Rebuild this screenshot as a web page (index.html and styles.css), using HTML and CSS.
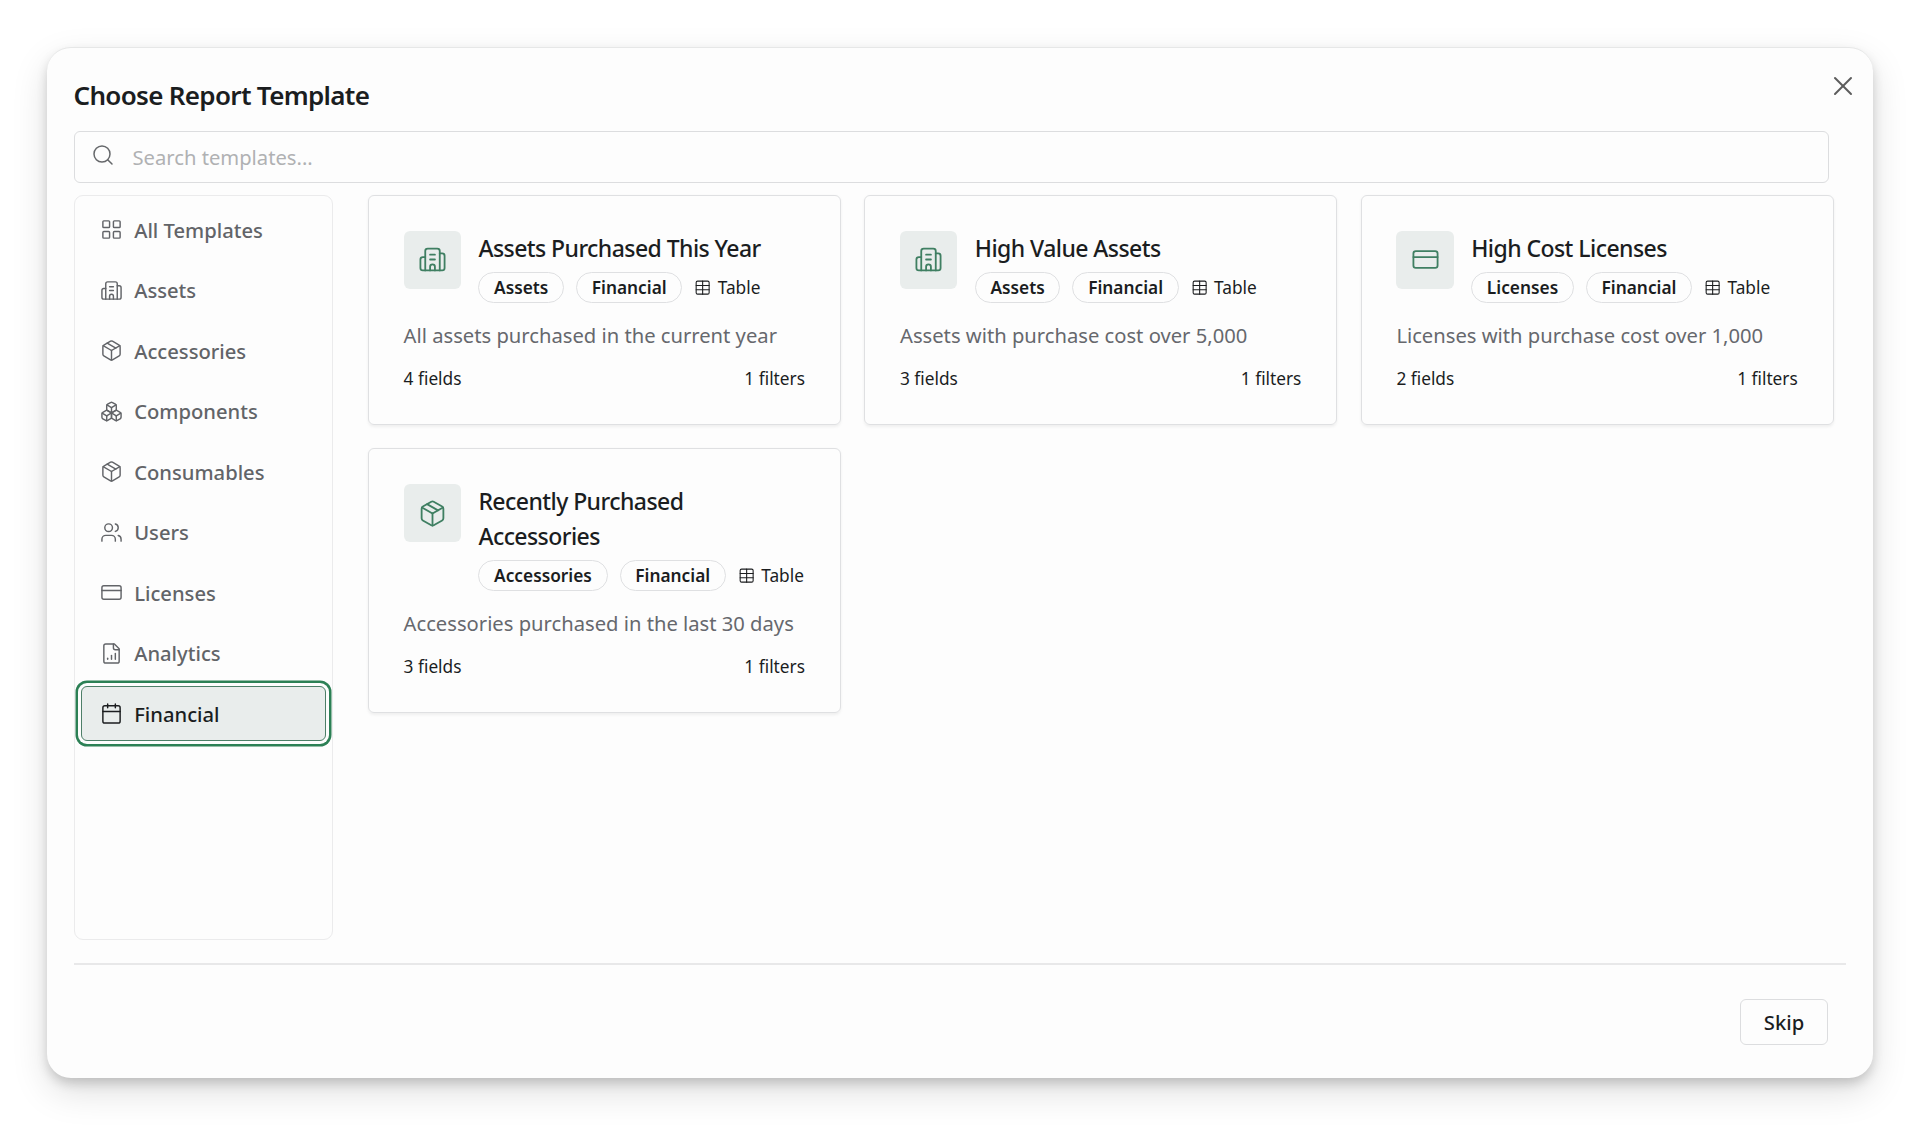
FILE: index.html
```html
<!DOCTYPE html>
<html lang="en">
<head>
    <meta charset="UTF-8">
    <meta name="viewport" content="width=device-width, initial-scale=1.0">
    <title>Choose Report Template</title>
    <link rel="stylesheet" href="styles.css">
</head>
<body>

    <!-- shared icons -->
    <svg class="icon-defs" width="0" height="0">
        <symbol id="i-grid" viewBox="0 0 24 24"><rect x="3" y="3" width="7" height="7" rx="1"/><rect x="14" y="3" width="7" height="7" rx="1"/><rect x="14" y="14" width="7" height="7" rx="1"/><rect x="3" y="14" width="7" height="7" rx="1"/></symbol>
        <symbol id="i-building" viewBox="0 0 24 24"><path d="M10 12h4"/><path d="M10 8h4"/><path d="M14 21v-3a2 2 0 0 0-4 0v3"/><path d="M6 10H4a2 2 0 0 0-2 2v7a2 2 0 0 0 2 2h16a2 2 0 0 0 2-2V9a2 2 0 0 0-2-2h-2"/><path d="M6 21V5a2 2 0 0 1 2-2h8a2 2 0 0 1 2 2v16"/></symbol>
        <symbol id="i-package" viewBox="0 0 24 24"><path d="M11 21.73a2 2 0 0 0 2 0l7-4A2 2 0 0 0 21 16V8a2 2 0 0 0-1-1.73l-7-4a2 2 0 0 0-2 0l-7 4A2 2 0 0 0 3 8v8a2 2 0 0 0 1 1.73z"/><path d="M12 22V12"/><path d="M3.29 7 12 12l8.71-5"/><path d="m7.5 4.27 9 5.15"/></symbol>
        <symbol id="i-boxes" viewBox="0 0 24 24"><path d="M2.97 12.92A2 2 0 0 0 2 14.63v3.24a2 2 0 0 0 .97 1.71l3 1.8a2 2 0 0 0 2.06 0L12 19v-5.5l-5-3-4.03 2.42Z"/><path d="m7 16.5-4.74-2.85"/><path d="m7 16.5 5-3"/><path d="M7 16.5v5.17"/><path d="M12 13.5V19l3.97 2.38a2 2 0 0 0 2.06 0l3-1.8a2 2 0 0 0 .97-1.71v-3.24a2 2 0 0 0-.97-1.71L17 10.5l-5 3Z"/><path d="m17 16.5-5-3"/><path d="m17 16.5 4.74-2.85"/><path d="M17 16.5v5.17"/><path d="M7.97 4.42A2 2 0 0 0 7 6.13v4.37l5 3 5-3V6.13a2 2 0 0 0-.97-1.71l-3-1.8a2 2 0 0 0-2.06 0l-3 1.8Z"/><path d="M12 8 7.26 5.15"/><path d="m12 8 4.74-2.85"/><path d="M12 13.5V8"/></symbol>
        <symbol id="i-users" viewBox="0 0 24 24"><path d="M16 21v-2a4 4 0 0 0-4-4H6a4 4 0 0 0-4 4v2"/><circle cx="9" cy="7" r="4"/><path d="M22 21v-2a4 4 0 0 0-3-3.87"/><path d="M16 3.13a4 4 0 0 1 0 7.75"/></symbol>
        <symbol id="i-card" viewBox="0 0 24 24"><rect x="2" y="5" width="20" height="14" rx="2"/><path d="M2 10h20"/></symbol>
        <symbol id="i-chart" viewBox="0 0 24 24"><path d="M15 2H6a2 2 0 0 0-2 2v16a2 2 0 0 0 2 2h12a2 2 0 0 0 2-2V7Z"/><path d="M14 2v4a2 2 0 0 0 2 2h4"/><path d="M8 18v-1"/><path d="M12 18v-4"/><path d="M16 18v-6"/></symbol>
        <symbol id="i-calendar" viewBox="0 0 24 24"><path d="M8 2v4"/><path d="M16 2v4"/><rect x="3" y="4" width="18" height="18" rx="2"/><path d="M3 10h18"/></symbol>
        <symbol id="i-table" viewBox="0 0 24 24"><rect x="3" y="3" width="18" height="18" rx="2"/><path d="M12 3v18"/><path d="M3 9h18"/><path d="M3 15h18"/></symbol>
        <symbol id="i-search" viewBox="0 0 24 24"><circle cx="11" cy="11" r="8"/><path d="m21 21-4.3-4.3"/></symbol>
        <symbol id="i-close" viewBox="0 0 24 24"><path d="M18 6 6 18"/><path d="m6 6 12 12"/></symbol>
    </svg>

    <div class="dialog">
        <button class="close-btn" aria-label="Close"><svg class="icon"><use href="#i-close"/></svg></button>

        <h1>Choose Report Template</h1>

        <div class="search">
            <svg class="icon"><use href="#i-search"/></svg>
            <input type="text" placeholder="Search templates...">
        </div>

        <div class="content">
            <nav class="sidebar">
                <button class="nav-item"><svg class="icon"><use href="#i-grid"/></svg>All Templates</button>
                <button class="nav-item"><svg class="icon"><use href="#i-building"/></svg>Assets</button>
                <button class="nav-item"><svg class="icon"><use href="#i-package"/></svg>Accessories</button>
                <button class="nav-item"><svg class="icon"><use href="#i-boxes"/></svg>Components</button>
                <button class="nav-item"><svg class="icon"><use href="#i-package"/></svg>Consumables</button>
                <button class="nav-item"><svg class="icon"><use href="#i-users"/></svg>Users</button>
                <button class="nav-item"><svg class="icon"><use href="#i-card"/></svg>Licenses</button>
                <button class="nav-item"><svg class="icon"><use href="#i-chart"/></svg>Analytics</button>
                <button class="nav-item active"><svg class="icon"><use href="#i-calendar"/></svg>Financial</button>
            </nav>

            <div class="templates">
                <div class="card">
                    <div class="card-top">
                        <div class="card-icon"><svg class="icon"><use href="#i-building"/></svg></div>
                        <div class="card-head">
                            <h2>Assets Purchased This Year</h2>
                            <div class="tags">
                                <span class="badge">Assets</span>
                                <span class="badge">Financial</span>
                                <span class="type"><svg class="icon"><use href="#i-table"/></svg>Table</span>
                            </div>
                        </div>
                    </div>
                    <p>All assets purchased in the current year</p>
                    <div class="meta"><span>4 fields</span><span>1 filters</span></div>
                </div>

                <div class="card">
                    <div class="card-top">
                        <div class="card-icon"><svg class="icon"><use href="#i-building"/></svg></div>
                        <div class="card-head">
                            <h2>High Value Assets</h2>
                            <div class="tags">
                                <span class="badge">Assets</span>
                                <span class="badge">Financial</span>
                                <span class="type"><svg class="icon"><use href="#i-table"/></svg>Table</span>
                            </div>
                        </div>
                    </div>
                    <p>Assets with purchase cost over 5,000</p>
                    <div class="meta"><span>3 fields</span><span>1 filters</span></div>
                </div>

                <div class="card">
                    <div class="card-top">
                        <div class="card-icon"><svg class="icon"><use href="#i-card"/></svg></div>
                        <div class="card-head">
                            <h2>High Cost Licenses</h2>
                            <div class="tags">
                                <span class="badge">Licenses</span>
                                <span class="badge">Financial</span>
                                <span class="type"><svg class="icon"><use href="#i-table"/></svg>Table</span>
                            </div>
                        </div>
                    </div>
                    <p>Licenses with purchase cost over 1,000</p>
                    <div class="meta"><span>2 fields</span><span>1 filters</span></div>
                </div>

                <div class="card">
                    <div class="card-top">
                        <div class="card-icon"><svg class="icon"><use href="#i-package"/></svg></div>
                        <div class="card-head">
                            <h2>Recently Purchased Accessories</h2>
                            <div class="tags">
                                <span class="badge">Accessories</span>
                                <span class="badge">Financial</span>
                                <span class="type"><svg class="icon"><use href="#i-table"/></svg>Table</span>
                            </div>
                        </div>
                    </div>
                    <p>Accessories purchased in the last 30 days</p>
                    <div class="meta"><span>3 fields</span><span>1 filters</span></div>
                </div>
            </div>
        </div>

        <div class="footer">
            <button class="skip-btn">Skip</button>
        </div>
    </div>

</body>
</html>
```
FILE: styles.css
```css
* {
    box-sizing: border-box;
}

body {
    margin: 0;
    padding: 47px;
    height: 1125px;
    overflow: hidden;
    background: #ffffff;
    color: #1b1d1f;
    font-family: "Noto Sans", sans-serif;
}

h1, h2, p {
    margin: 0;
}

button, input {
    font-family: inherit;
    background: none;
    border: none;
    padding: 0;
    color: inherit;
}

.icon-defs {
    position: absolute;
}

.icon {
    width: 23px;
    height: 23px;
    flex-shrink: 0;
    fill: none;
    stroke: currentColor;
    stroke-width: 1.5;
    stroke-linecap: round;
    stroke-linejoin: round;
}

.dialog {
    position: relative;
    display: flex;
    flex-direction: column;
    width: 1826px;
    height: 1031px;
    padding: 29px 27px 0;
    background: #fdfdfd;
    border-top: 1px solid #e6e7e7;
    border-radius: 24px;
    box-shadow: 0 14px 36px rgba(0, 0, 0, 0.13), 0 6px 12px -1px rgba(0, 0, 0, 0.18);
}

.close-btn {
    position: absolute;
    top: 21.5px;
    right: 14px;
    width: 32px;
    height: 32px;
    color: #5c5c5c;
}

.close-btn .icon {
    width: 32px;
    height: 32px;
    display: block;
}

h1 {
    margin-left: -0.5px;
    font-size: 26px;
    line-height: 36px;
    font-weight: 600;
    letter-spacing: -0.68px;
}

.search {
    display: flex;
    align-items: center;
    width: 1755px;
    height: 52px;
    margin-top: 18px;
    padding: 0 16px;
    border: 1px solid #dcdddf;
    border-radius: 6px;
}

.search .icon {
    width: 24px;
    height: 24px;
    margin-top: -5px;
    color: #66686b;
}

.search input {
    flex: 1;
    margin-left: 17.5px;
    font-size: 20.2px;
    outline: none;
}

.search input::placeholder {
    color: #b0b1b3;
}

.content {
    display: flex;
    gap: 35px;
    margin-top: 12px;
}

.sidebar {
    display: flex;
    flex-direction: column;
    gap: 5.8px;
    width: 259px;
    height: 745px;
    padding: 6.6px 6px;
    border: 1px solid #ebebec;
    border-radius: 9px;
}

.nav-item {
    display: flex;
    align-items: center;
    gap: 11.6px;
    height: 54.7px;
    padding: 0 18.6px;
    border-radius: 6px;
    color: #626468;
    font-size: 20.2px;
    font-weight: 500;
}

.nav-item.active {
    background: #e9edec;
    color: #1b1d1f;
    border: 1px solid #4d7f68;
    padding: 0 17.6px;
    box-shadow: 0 0 0 3px #fdfdfd, 0 0 0 5.5px #2c8055;
}

.templates {
    display: grid;
    grid-template-columns: repeat(3, 473px);
    gap: 23.4px;
    align-content: start;
}

.card {
    padding: 35px 35px 34px 34.6px;
    border: 1px solid #dfe0e2;
    border-radius: 6px;
    box-shadow: 0 1.5px 3px rgba(0, 0, 0, 0.06);
}

.card-top {
    display: flex;
    gap: 17.3px;
}

.card-icon {
    display: flex;
    align-items: center;
    justify-content: center;
    flex-shrink: 0;
    width: 57.5px;
    height: 57.5px;
    background: #e9edec;
    border-radius: 6px;
    color: #3f7f62;
}

.card-icon .icon {
    width: 29px;
    height: 29px;
}

h2 {
    font-size: 23px;
    line-height: 34.6px;
    font-weight: 500;
    letter-spacing: -0.56px;
}

.tags {
    display: flex;
    align-items: center;
    gap: 12px;
    margin-top: 6.6px;
    font-size: 17.3px;
    white-space: nowrap;
}

.badge {
    height: 31px;
    padding: 0 14.7px;
    border: 1px solid #dfe0e2;
    border-radius: 16px;
    line-height: 29.5px;
    font-weight: 600;
}

.type {
    display: flex;
    align-items: center;
    gap: 6px;
}

.type .icon {
    width: 17.3px;
    height: 17.3px;
}

.card p {
    margin-top: 17.8px;
    color: #66686d;
    font-size: 20.2px;
    line-height: 28.8px;
    white-space: nowrap;
}

.meta {
    display: flex;
    justify-content: space-between;
    margin-top: 17.3px;
    font-size: 17.3px;
    line-height: 23px;
}

.footer {
    display: flex;
    justify-content: flex-end;
    margin-top: 23px;
    padding: 34px 18px 0 0;
    border-top: 2px solid #e8e8e9;
}

.skip-btn {
    width: 88px;
    height: 46px;
    border: 1px solid #dcdddf;
    border-radius: 6px;
    font-size: 20.2px;
    font-weight: 500;
}
```
